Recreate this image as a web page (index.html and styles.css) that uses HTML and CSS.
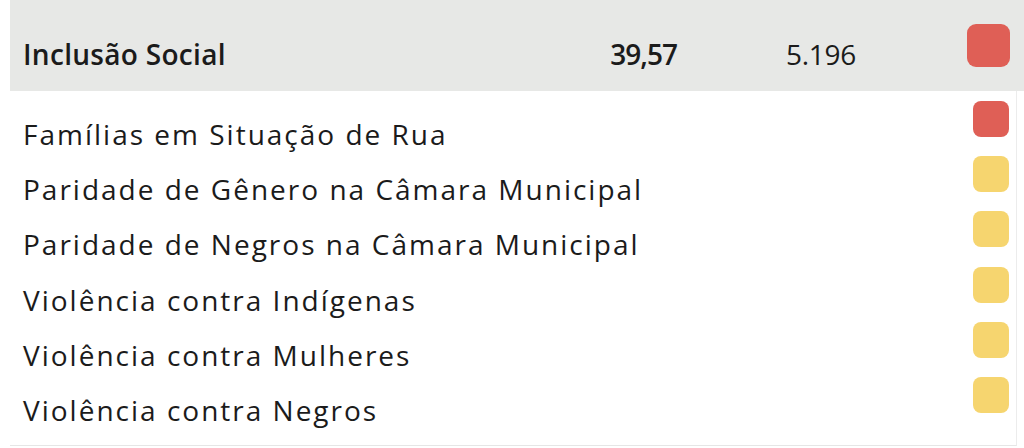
FILE: index.html
```html
<!DOCTYPE html>
<html lang="pt">
<head>
<meta charset="utf-8">
<link rel="stylesheet" href="styles.css">
</head>
<body>
<div class="panel">
  <div class="header">
    <div class="h-name">Inclusão Social</div>
    <div class="h-score">39,57</div>
    <div class="h-count">5.196</div>
    <div class="h-flag"><span class="sq sq-lg red"></span></div>
  </div>
  <div class="list">
    <div class="row"><span class="label">Famílias em Situação de Rua</span><span class="sq red"></span></div>
    <div class="row"><span class="label">Paridade de Gênero na Câmara Municipal</span><span class="sq yellow"></span></div>
    <div class="row"><span class="label">Paridade de Negros na Câmara Municipal</span><span class="sq yellow"></span></div>
    <div class="row"><span class="label">Violência contra Indígenas</span><span class="sq yellow"></span></div>
    <div class="row"><span class="label">Violência contra Mulheres</span><span class="sq yellow"></span></div>
    <div class="row"><span class="label">Violência contra Negros</span><span class="sq yellow"></span></div>
  </div>
</div>
</body>
</html>
```
FILE: styles.css
```css
html, body {
  margin: 0;
  padding: 0;
  background: #ffffff;
}
body {
  font-family: "Open Sans", "Noto Sans", sans-serif;
  color: #1b1b1b;
  width: 1024px;
  height: 448px;
  overflow: hidden;
}
.panel {
  margin-left: 10px;
}
.header {
  height: 91px;
  background: #e7e8e6;
  display: grid;
  grid-template-columns: 1fr 77px 179px 154px;
  align-items: center;
  padding: 0 14px 0 13px;
  font-size: 28px;
}
.h-name, .h-score, .h-count {
  padding-top: 17px;
  white-space: nowrap;
}
.h-name { font-weight: 600; letter-spacing: 0.3px; }
.h-score { font-weight: 600; text-align: right; letter-spacing: -1px; }
.h-count { font-weight: 400; text-align: right; letter-spacing: -0.3px; }
.h-flag { display: flex; justify-content: flex-end; }

.list {
  width: 1007px;
  height: 355px;
  border-right: 1px solid #ececec;
  border-bottom: 1px solid #e6e6e6;
  padding: 10px 0 0 13px;
  box-sizing: border-box;
}
.row {
  height: 55.2px;
  display: flex;
  justify-content: space-between;
  align-items: flex-start;
  padding-right: 7px;
}
.label {
  font-size: 28px;
  line-height: 36px;
  margin-top: 15px;
  letter-spacing: 2px;
  white-space: nowrap;
}
.sq {
  display: block;
  width: 36px;
  height: 36px;
  border-radius: 8px;
}
.sq-lg {
  width: 43px;
  height: 43px;
  border-radius: 9px;
}
.red { background: #df5f56; }
.yellow { background: #f6d56f; }
```
